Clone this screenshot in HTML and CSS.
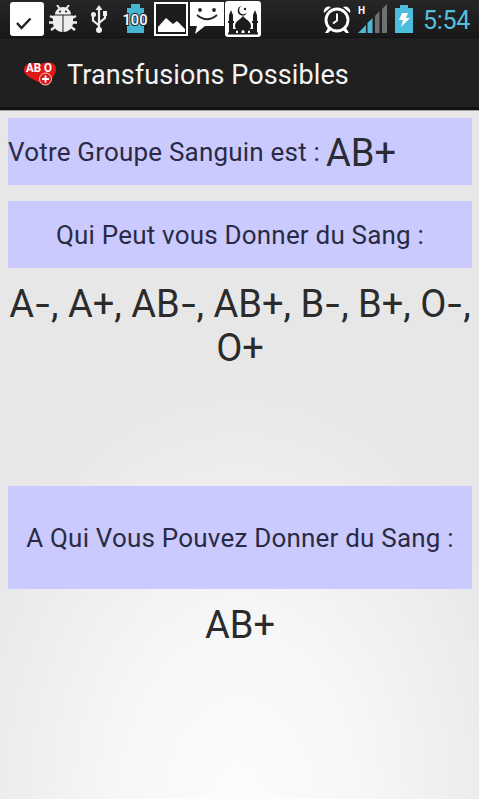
FILE: index.html
```html
<!DOCTYPE html>
<html lang="fr">
<head>
    <meta charset="UTF-8">
    <meta name="viewport" content="width=device-width, initial-scale=1.0">
    <title>Transfusions Possibles</title>
    <link rel="stylesheet" href="styles.css">
</head>
<body>
    <div class="status-bar">
        <div class="notifications">
            <svg class="check" width="34" height="34" viewBox="0 0 34 34">
                <rect width="34" height="34" rx="3" fill="#fff"/>
                <path d="M7 21l4.500 5 9-9.500" fill="none" stroke="#222" stroke-width="2.500"/>
            </svg>
            <svg class="bug" width="28" height="28" viewBox="0 0 28 28">
                <path d="M8 0l3 4M20 0l-3 4" stroke="#eee" stroke-width="2"/>
                <path d="M6 9.500a8 7.500 0 0 1 16 0zM4 10.500h9.500V27A9.500 9.500 0 0 1 4 19zM14.500 10.500H24V19a9.500 9.500 0 0 1-9.500 8z" fill="#eee"/>
                <path d="M5 13l-4-2M23 13l4-2M5 17.500H0M23 17.500h5M6 22l-4 3M22 22l4 3" stroke="#eee" stroke-width="2.500"/>
                <circle cx="11" cy="6.500" r="1.100" fill="#222"/>
                <circle cx="17" cy="6.500" r="1.100" fill="#222"/>
            </svg>
            <svg class="usb" width="16" height="28" viewBox="0 0 16 28">
                <path d="M8 4v20M2 10v5.500l6 5M14 8v5l-6 5" fill="none" stroke="#eee" stroke-width="2.200"/>
                <path d="M8 0l3.500 5h-7zM12 6h4v5h-4z" fill="#eee"/>
                <circle cx="2.500" cy="9.500" r="2.500" fill="#eee"/>
                <circle cx="8" cy="25" r="3" fill="#eee"/>
            </svg>
            <svg class="level" width="26" height="29" viewBox="0 0 26 29">
                <path d="M9 0h9v4h4v25H5V4h4z" fill="#45b5d0"/>
                <text x="13" y="21" text-anchor="middle" textLength="25" lengthAdjust="spacingAndGlyphs">100</text>
            </svg>
            <svg class="picture" width="34" height="34" viewBox="0 0 34 34">
                <rect x="1" y="1" width="32" height="32" fill="#1c1c1d" stroke="#fff" stroke-width="2"/>
                <path d="M4 30v-5l8-9 7 6 4-3 8 8v3z" fill="#fff"/>
            </svg>
            <svg class="smile" width="34" height="33" viewBox="0 0 34 33">
                <path d="M0 0h34v24H15L5 32l2-8H0z" fill="#fff"/>
                <path d="M7 13q10 8.500 20 0" fill="none" stroke="#222" stroke-width="1.800"/>
                <circle cx="10" cy="8" r="1.900" fill="#222"/>
                <circle cx="24" cy="8" r="1.900" fill="#222"/>
            </svg>
            <svg class="mosque" width="36" height="36" viewBox="0 0 36 36">
                <rect width="36" height="36" rx="3" fill="#fff"/>
                <path d="M18 14.500c1 3.500 8 5 8 10.500 0 2-1.500 4-1.500 4h-13s-1.500-2-1.500-4c0-5.500 7-7 8-10.500zM4 33V22H3v-2h1v-6l2-5 2 5v6h1v2H8v11zM28 33V22h-1v-2h1v-6l2-5 2 5v6h1v2h-1v11zM8 28h20v4H8zM3 31.500h30v2H3z" fill="#1c1c1d"/>
                <path d="M16.500 32v-1.500a1.500 1.500 0 0 1 3 0V32zM11 32v-1.500a1 1 0 0 1 2 0V32zM23 32v-1.500a1 1 0 0 1 2 0V32z" fill="#fff"/>
                <path d="M17 5a4.800 4.800 0 1 0 5 6.500 4.300 4.300 0 1 1-5-6.500z" fill="#1c1c1d"/>
                <circle cx="20" cy="8" r="1.200" fill="#1c1c1d"/>
            </svg>
        </div>
        <div class="system">
            <svg class="alarm" width="28" height="27" viewBox="0 0 28 27">
                <path d="M1 7a5 5 0 0 1 7-6zM27 7a5 5 0 0 0-7-6zM5 22l-3 5h3l3-3M23 22l3 5h-3l-3-3" fill="#fff"/>
                <circle cx="14" cy="14" r="11" fill="#202021" stroke="#fff" stroke-width="2.800"/>
                <path d="M14 7.500v7l-4 3" fill="none" stroke="#fff" stroke-width="2"/>
            </svg>
            <svg class="signal" width="30" height="30" viewBox="0 0 30 30">
                <path d="M0 29l8-8v8zM9.500 19l5-5v15h-5z" fill="#4cb7d5"/>
                <path d="M17 12l4.500-5v22H17zM24 5l5-5v29h-5z" fill="#707071"/>
                <text x="0" y="9.500">H</text>
            </svg>
            <svg class="battery" width="18" height="28" viewBox="0 0 18 28">
                <path d="M5 0h8v3h5v25H0V3h5z" fill="#4cbedb"/>
                <path d="M7 8h6l-2 5h4L6 22l2-7H4z" fill="#fff"/>
            </svg>
            <span class="time">5:54</span>
        </div>
    </div>

    <div class="action-bar">
        <svg class="logo" width="34" height="26" viewBox="0 0 34 26">
            <path d="M17 4C21 0 33 0 33 8c0 6-5 10-9 16h-4C14 19 1 16 1 9 1 1 12 0 17 4z" fill="#e01818"/>
            <text x="3" y="11" textLength="26" lengthAdjust="spacingAndGlyphs">AB O</text>
            <circle cx="22.500" cy="18" r="6" fill="#d91a1a" stroke="#f4cccc" stroke-width="1"/>
            <path d="M22.500 14.500v7M19 18h7" stroke="#fff" stroke-width="1.800"/>
        </svg>
        <h1>Transfusions Possibles</h1>
    </div>

    <div class="content">
        <div class="panel group">
            <span class="label">Votre Groupe Sanguin est :</span>
            <span class="blood">AB+</span>
        </div>
        <div class="panel donors"><span>Qui Peut vous Donner du Sang :</span></div>
        <div class="result donor-list">A<span class="minus">-</span>, A+, AB<span class="minus">-</span>, AB+, B<span class="minus">-</span>, B+, O<span class="minus">-</span>,<br>O+</div>
        <div class="panel receivers"><span>A Qui Vous Pouvez Donner du Sang :</span></div>
        <div class="result">AB+</div>
    </div>
</body>
</html>
```

FILE: styles.css
```css
* {
    box-sizing: border-box;
}

body {
    margin: 0;
    height: 799px;
    overflow: hidden;
    font-family: Roboto, sans-serif;
    color: #2b2b2c;
    background: #e7e7e7;
    display: flex;
    flex-direction: column;
}

svg {
    display: block;
    flex: none;
}

.status-bar {
    height: 38px;
    display: flex;
    justify-content: space-between;
    background: linear-gradient(#262628, #19191a);
    border-bottom: 1px solid #101011;
}

.notifications,
.system {
    display: flex;
    align-items: flex-start;
}

.notifications {
    padding: 2px 0 0 10px;
}

.bug {
    margin: 3px 0 0 5px;
}

.usb {
    margin: 3px 0 0 14px;
}

.level {
    margin: 2px 0 0 15px;
}

.level text {
    font-size: 15px;
    font-weight: 500;
    fill: #fff;
    stroke: #222;
    stroke-width: 2px;
    paint-order: stroke;
}

.picture {
    margin-left: 6px;
}

.smile {
    margin-left: 2px;
}

.mosque {
    margin-left: 1px;
    margin-top: -1px;
}

.system {
    padding: 5px 9px 0 0;
}

.alarm {
    margin-top: 1px;
}

.signal {
    margin-left: 7px;
    margin-top: -1px;
}

.signal text {
    font-size: 10px;
    font-weight: 700;
    fill: #fff;
}

.battery {
    margin-left: 7px;
}

.time {
    margin-left: 10px;
    width: 47px;
    font-size: 25px;
    line-height: 31px;
    letter-spacing: -0.3px;
    color: #56bfdc;
}

.action-bar {
    height: 72px;
    display: flex;
    align-items: center;
    padding: 5px 0 0 23px;
    background: #212021;
    border-bottom: 3px solid #121213;
}

.logo {
    margin-top: -3px;
}

.logo text {
    font-size: 12px;
    font-weight: 700;
    fill: #fff;
}

h1 {
    margin: 0 0 0 10px;
    font-size: 27px;
    font-weight: 400;
    letter-spacing: 0.1px;
    color: #f4f4f4;
    white-space: nowrap;
}

.content {
    flex: 1;
    padding: 7px 7px 0 8px;
    border-top: 1px solid #a5a5a6;
    background: radial-gradient(ellipse 300px 430px at 50% 100%, #fcfcfd 0%, #f7f7f8 40%, #e7e7e7 100%);
}

.panel {
    display: flex;
    align-items: center;
    justify-content: center;
    height: 67px;
    background: #cacafe;
    font-size: 26px;
    letter-spacing: 0.2px;
    color: #2a2a45;
    white-space: nowrap;
}

.group {
    justify-content: flex-start;
    margin-bottom: 16px;
}

.blood {
    margin-left: 6px;
    padding-top: 2px;
    font-size: 38px;
    letter-spacing: 0;
    color: #2b2b32;
}

.result {
    padding-top: 14px;
    font-size: 38px;
    line-height: 44px;
    text-align: center;
}

.donor-list {
    height: 218px;
    white-space: nowrap;
}

/* wider dash for the negative groups */
.minus {
    display: inline-block;
    width: 17px;
    transform: scaleX(1.35);
}

.receivers {
    height: 103px;
}
```
